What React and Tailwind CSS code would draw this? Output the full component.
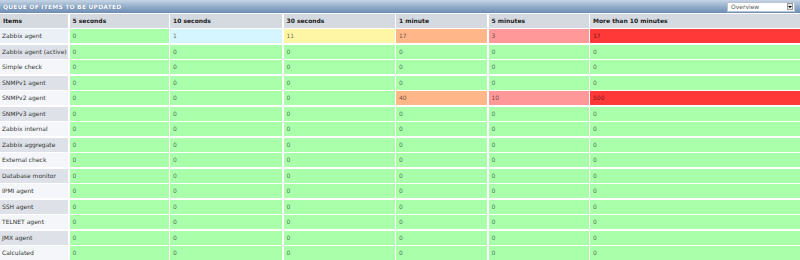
import React from 'react';

const GREEN = 'bg-[#aaffaa]';

const colors = {
  info: 'bg-[#d6f6ff]',
  warn: 'bg-[#fff6a5]',
  avg: 'bg-[#ffb689]',
  high: 'bg-[#ff9999]',
  dis: 'bg-[#ff3838]',
};

const rows = [
  { name: 'Zabbix agent', cells: [['0'], ['1', colors.info], ['11', colors.warn], ['17', colors.avg], ['3', colors.high], ['17', colors.dis]] },
  { name: 'Zabbix agent (active)' },
  { name: 'Simple check' },
  { name: 'SNMPv1 agent' },
  { name: 'SNMPv2 agent', cells: [['0'], ['0'], ['0'], ['40', colors.avg], ['10', colors.high], ['500', colors.dis]] },
  { name: 'SNMPv3 agent' },
  { name: 'Zabbix internal' },
  { name: 'Zabbix aggregate' },
  { name: 'External check' },
  { name: 'Database monitor' },
  { name: 'IPMI agent' },
  { name: 'SSH agent' },
  { name: 'TELNET agent' },
  { name: 'JMX agent' },
  { name: 'Calculated' },
];

const headers = ['Items', '5 seconds', '10 seconds', '30 seconds', '1 minute', '5 minutes', 'More than 10 minutes'];

const App = () => {
  return (
    <div
      className="w-[800px] h-[260px] bg-white overflow-hidden flex flex-col text-[6px] leading-none"
      style={{ fontFamily: '"DejaVu Sans", Verdana, sans-serif' }}
    >
      {/* Title bar */}
      <div className="h-[13px] shrink-0 flex items-center justify-between pl-[3px] pr-[5px] bg-gradient-to-b from-[#c6d5e6] via-[#94aecb] to-[#6e8db3]">
        <span className="text-white font-bold uppercase tracking-[0.2px] [text-shadow:0_0_1px_#4a6a90]">
          Queue of items to be updated
        </span>
        <div className="w-[68px] h-[10px] bg-white border border-[#b8c4d2] flex items-center justify-between pl-[3px] pr-[1px]">
          <span className="text-[#555]">Overview</span>
          <span className="w-[6px] h-[7px] bg-[#e8e8e8] border border-[#999] flex items-center justify-center">
            <span className="w-0 h-0 border-l-[2px] border-r-[2px] border-t-[2px] border-l-transparent border-r-transparent border-t-black" />
          </span>
        </div>
      </div>

      {/* Table */}
      <div className="flex-1 mt-[1px] grid grid-cols-[68px_99px_112px_111px_91px_100px_1fr] grid-rows-[repeat(16,minmax(0,1fr))] gap-x-[1.5px] gap-y-[1.5px]">
        {headers.map(h => (
          <div key={h} className="bg-[#d5dae1] flex items-center pl-[3px] font-bold text-[#222]">
            {h}
          </div>
        ))}
        {rows.map((row, i) => (
          <React.Fragment key={row.name}>
            <div
              className={`flex items-center pl-[2px] text-[#333] whitespace-nowrap ${
                i === 0 ? 'bg-[#eaf0f5]' : i % 2 === 0 ? 'bg-[#f4f6f9]' : 'bg-[#dee2e8]'
              }`}
            >
              {row.name}
            </div>
            {(row.cells || [['0'], ['0'], ['0'], ['0'], ['0'], ['0']]).map(([v, c], j) => (
              <div key={j} className={`flex items-center pl-[3px] text-black/60 ${c || GREEN}`}>
                {v}
              </div>
            ))}
          </React.Fragment>
        ))}
      </div>
    </div>
  );
};

export default App;
